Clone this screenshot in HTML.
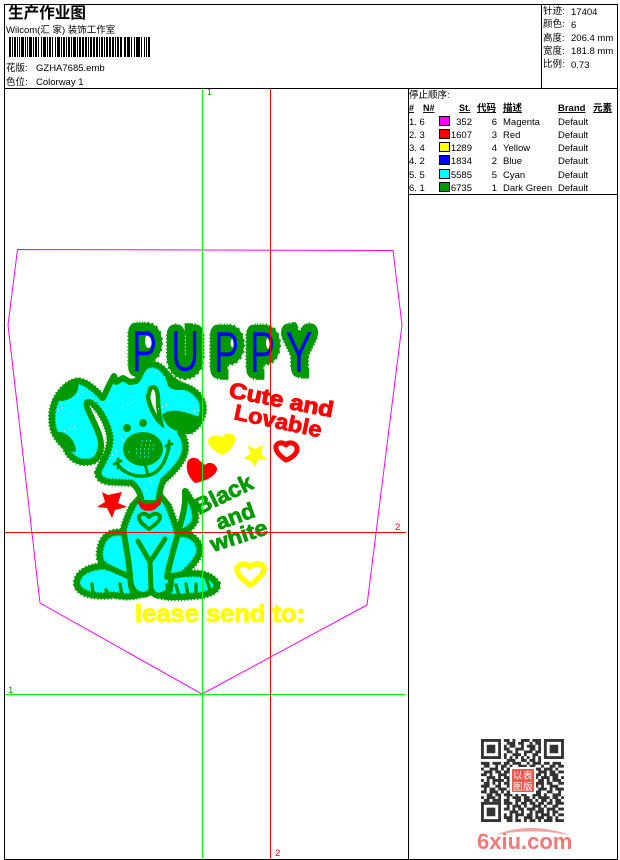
<!DOCTYPE html>
<html><head><meta charset="utf-8"><title>生产作业图</title>
<style>
html,body{margin:0;padding:0;background:#fff}
body{width:620px;height:860px;overflow:hidden}
svg{display:block}
text{font-family:"Liberation Sans","Noto Sans CJK SC",sans-serif;font-size:9.5px;fill:#000}
.g{fill:none;stroke:#090;stroke-width:5;stroke-linejoin:round;stroke-linecap:round}
.f{fill:#0ff;stroke:#090;stroke-width:6;stroke-linejoin:round}
.d{fill:none;stroke:#090;stroke-width:8;stroke-dasharray:1.2 2}
.h{font-weight:bold;text-decoration:underline}
.pg{font-size:58px;fill:#090;stroke:#090;stroke-width:21;stroke-linejoin:round}
.pf{font-size:58px;fill:none;stroke:#090;stroke-width:24;stroke-dasharray:1.5 2.500}
.pb{font-size:58px;fill:#00f;stroke:#090;stroke-width:.5}
</style></head><body>
<svg xmlns="http://www.w3.org/2000/svg" width="620" height="860" viewBox="0 0 620 860">
<rect width="620" height="860" fill="#fff"/>

<!-- pocket -->
<path d="M17.500 249.500L393 250.500L402 325L367 605L202 694L40 603L8 325Z" fill="none" stroke="#f0f" stroke-width="1"/>

<!-- PUPPY green layer -->
<g>
<text class="pg" transform="translate(132 367) scale(.65 .88)">P</text>
<text class="pf" transform="translate(132 367) scale(.65 .88)">P</text>
<text class="pg" transform="translate(171 369) scale(.68 .88)">U</text>
<text class="pf" transform="translate(171 369) scale(.68 .88)">U</text>
<text class="pg" transform="translate(214 369) scale(.65 .88)">P</text>
<text class="pf" transform="translate(214 369) scale(.65 .88)">P</text>
<text class="pg" transform="translate(250 369) scale(.65 .88)">P</text>
<text class="pf" transform="translate(250 369) scale(.65 .88)">P</text>
<text class="pg" transform="translate(287 368) scale(.65 .88)">Y</text>
<text class="pf" transform="translate(287 368) scale(.65 .88)">Y</text>
</g>
<ellipse cx="148.500" cy="341" rx="3.500" ry="7" fill="#fff"/>
<ellipse cx="234" cy="343" rx="3.500" ry="5" fill="#fff"/>
<ellipse cx="269" cy="343" rx="3" ry="6" fill="#fff"/>
<g>
<text class="pb" transform="translate(132 371) scale(.65 1)">P</text>
<text class="pb" transform="translate(171 371) scale(.68 1)">U</text>
<text class="pb" transform="translate(214 372) scale(.65 1)">P</text>
<text class="pb" transform="translate(250 372) scale(.65 1)">P</text>
<text class="pb" transform="translate(285 372) scale(.72 1)">Y</text>
</g>

<!-- tail -->
<path class="f" d="M185 491C192 500 197 512 195 521C191 529 185 532 178 533C181 520 186 510 185 491Z"/>
<path class="d" d="M185 491C192 500 197 512 195 521C191 529 185 532 178 533"/>

<!-- feet -->
<path class="f" d="M103 566C87 567 75 574 77 586C82 596 100 597 115 595C125 598 140 597 150 590L148 576L125 570Z"/>
<path class="d" d="M103 566C87 567 75 574 77 586C82 596 100 597 115 595C125 598 140 597 150 590"/>
<path class="f" d="M153 592C160 598 175 598 195 596C210 595 218 590 217 584C212 575 200 572 186 574L160 576Z"/>
<path class="d" d="M153 592C160 598 175 598 195 596C210 595 218 590 217 584C212 575 200 572 186 574"/>

<!-- body -->
<path class="f" d="M133 505L142 495H160L168 505C172 515 176 525 178 535C175 550 172 570 170 590C160 598 155 597 151 590C148 597 135 597 131 585C129 565 125 550 122 535C124 525 128 515 133 505Z"/>
<path class="d" d="M133 505C128 515 124 525 122 535M168 505C172 515 176 525 178 535"/>

<!-- haunches -->
<path class="f" d="M124 533C110 530 102 537 100 550C98 560 102 565 110 568L130 577C129 560 126 548 124 533Z"/>
<path class="d" d="M124 533C110 530 102 537 100 550C98 560 102 565 110 568"/>
<path class="f" d="M178 534C192 532 200 542 200 551C198 560 190 568 183 574L167 577C170 560 174 548 178 534Z"/>
<path class="d" d="M178 534C192 532 200 542 200 551C198 560 190 568 183 574"/>

<!-- leg lines and toes -->
<path class="g" d="M138 541L150 562L165 539M150 562L151 590"/>
<path class="g" style="stroke-width:3.500" d="M92 584L93 595M106 590L110 597M120 584L122 596M130 587L132 594M167 585L169 596M176 585L179 596M186 584L188 596M196 584L196 594M206 578L210 590"/>

<!-- chest heart -->
<path class="g" style="stroke-width:4" d="M149 529C143 525 138 520 139 516C143 512 147 514 149 517C152 514 157 512 160 516C161 520 155 525 149 529Z"/>

<!-- head and left ear silhouette -->
<path class="f" d="M103 398C97 392 88 382 78 381C65 383 53 398 52 415C51 432 58 440 65 446C70 460 80 463 88 462C96 462 100 455 101 447C102 435 92 420 87 407C85 400 90 401 94 405C103 414 110 430 110 440C109 455 100 465 98 472C98 478 102 481 110 482L132 483C138 488 141 495 142 503H158C159 495 160 488 163 481C172 473 180 465 184 455C187 447 185 438 180 432L190 431C200 425 204 415 203 405C201 395 192 389 186 387C175 383 170 378 166 373C160 364 150 362 145 367C140 372 140 378 136 381L130 382L123 378L116 382L114 376C110 382 107 390 103 398Z"/>
<path class="d" d="M103 398C97 392 88 382 78 381C65 383 53 398 52 415C51 432 58 440 65 446C70 460 80 463 88 462C96 462 100 455 101 447M94 405C103 414 110 430 110 440C109 455 100 465 98 472C98 478 102 481 110 482L132 483M163 481C172 473 180 465 184 455C187 447 185 438 180 432M190 431C200 425 204 415 203 405C201 395 192 389 186 387C175 383 170 378 166 373C160 364 150 362 145 367"/>

<!-- ear patches -->
<path d="M55 400C60 388 70 383 78 384C80 392 72 400 62 401Z" fill="#090"/>
<path d="M55 432C66 430 76 440 76 452C65 452 56 442 55 432Z" fill="#090"/>
<path d="M165 376L186 388C180 392 172 390 168 386Z" fill="#090"/>
<path d="M162 415C170 408 180 410 200 417C196 426 190 431 180 431C172 431 165 425 162 415Z" fill="#090"/>

<!-- right ear sliver -->
<path d="M150 389C155 384 158 390 158 400C158 410 160 418 161 423C155 418 149 405 148 397Z" fill="#fff" stroke="#090" stroke-width="4.500"/>

<!-- eyes, muzzle, mouth -->
<circle cx="127" cy="428" r="4" fill="#090"/>
<circle cx="143" cy="423" r="4" fill="#090"/>
<ellipse cx="143" cy="449" rx="20" ry="17" fill="#090"/>
<path d="M142 441h1m3 0h1m3 0h1m-10 4h1m3 0h1m3 0h1m3 0h1M136 449h1m3 0h1m3 0h1m3 0h1m3 0h1M136 453h1m3 0h1m3 0h1m3 0h1M128 452h1M140 457h1m3 0h1m3 0h1" stroke="#0ff" stroke-width="1.300" fill="none"/>
<path class="g" style="stroke-width:3.500" d="M117 463C120 468 123 471 130 474C140 478 150 476 156 472C163 466 167 458 169 445"/>
<path class="g" style="stroke-width:3" d="M145 464L148 475M114 464L121 461M118 459L118 468M166 446L172 444M169 441L169 449"/>

<!-- specks -->
<path d="M58 410h1m3-2h1m8 5h1m-8 18h1m4-2h1m4-2h1M78 395h1m3-3h1m36 16h1m3-2h1m3-2h1m3-2h1m3-2h1m22 9h1m3-2h1m3-2h1m27 6h1m3-1h1m3-2h1M112 455h1m3-4h1M122 440h1M155 372h1m3 2h1M128 470h1M150 482h1m4-3h1M146 490h1" stroke="#fff" stroke-width="1.200" fill="none"/>

<!-- collar -->
<path d="M139 501C144 506 154 507 160 498C160 507 153 511 147 510C142 510 139 506 139 501Z" fill="#f00" stroke="#f00" stroke-width="1.500"/>

<!-- red shapes -->
<path d="M102 492L108 495L122 492L118 503L127 507L115 510L112 518L107 508L97 507L105 502Z" fill="#f00"/>
<path d="M195 483C188 477 186 470 187 463C189 457 196 456 200 461C203 463 204 464 205 465C209 461 215 463 217 468C218 474 208 481 195 483Z" fill="#f00"/>
<path d="M222 455C214 451 207 445 208 440C211 435 217 434 222 437C225 433 233 432 235 437C236 444 230 452 222 455Z" fill="#ff0"/>
<path d="M248 445L255 449L263 445L261 454L267 459L258 460L255 467L251 461L244 458L250 454Z" fill="#ff0"/>
<path d="M286 460C280 456 275 451 276 446C278 442 283 442 286 445C289 441 296 443 297 448C298 453 292 458 286 460Z" fill="none" stroke="#f00" stroke-width="5" stroke-linejoin="round"/>
<path d="M250 585C243 580 236 574 237 568C240 563 246 563 250 567C254 563 262 562 264 568C264 575 256 581 250 585Z" fill="none" stroke="#ff0" stroke-width="5.500" stroke-linejoin="round"/>

<!-- stitched text -->
<text transform="translate(228 397) rotate(11)" textLength="106" lengthAdjust="spacingAndGlyphs" style="font-size:22px;font-weight:bold;fill:#f00;stroke:#f00;stroke-width:1">Cute and</text>
<text transform="translate(233 419) rotate(12)" textLength="89" lengthAdjust="spacingAndGlyphs" style="font-size:22px;font-weight:bold;fill:#f00;stroke:#f00;stroke-width:.8">Lovable</text>
<text transform="translate(199 515) rotate(-26)" textLength="62" lengthAdjust="spacingAndGlyphs" style="font-size:23px;font-weight:bold;fill:#090;stroke:#090;stroke-width:.8">Black</text>
<text transform="translate(219 530) rotate(-20)" textLength="40" lengthAdjust="spacingAndGlyphs" style="font-size:22px;font-weight:bold;fill:#090;stroke:#090;stroke-width:.8">and</text>
<text transform="translate(213 552) rotate(-18)" textLength="59" lengthAdjust="spacingAndGlyphs" style="font-size:22px;font-weight:bold;fill:#090;stroke:#090;stroke-width:.8">white</text>
<text x="135" y="622" textLength="170" lengthAdjust="spacingAndGlyphs" style="font-size:25px;font-weight:bold;fill:#ff0;stroke:#ff0;stroke-width:1">lease send to:</text>

<!-- guides -->
<path d="M202.500 89V858.500M4.500 694.500H406" stroke="#0f0" stroke-width="1" fill="none"/>
<path d="M270.500 89V858.500M4.500 532.500H406" stroke="#f00" stroke-width="1" fill="none"/>
<text x="207" y="95" style="fill:#090;font-size:9px">1</text>
<text x="395" y="530" style="fill:#f00;font-size:9.500px">2</text>
<text x="8" y="693" style="fill:#090;font-size:9.500px">1</text>
<text x="275" y="856" style="fill:#f00;font-size:9.500px">2</text>

<!-- frame -->
<path d="M4.500 4.500H617.500V859.500H4.500ZM4.500 88.500H617.500M541.500 4.500V88.500M408.500 88.500V859.500M408.500 194.500H617.500" fill="none" stroke="#000" stroke-width="1"/>

<!-- header -->
<text x="8" y="18" style="font-size:15.600px;font-weight:bold">生产作业图</text>
<text x="6" y="33" style="font-size:9.500px">Wilcom(汇 家) 装饰工作室</text>
<path fill="#000" d="M9 37h2v20h-2zM12 37h1v20h-1zM14 37h2v20h-2zM17 37h1v20h-1zM19 37h1v20h-1zM21 37h3v20h-3zM25 37h1v20h-1zM27 37h1v20h-1zM29 37h3v20h-3zM33 37h1v20h-1zM35 37h2v20h-2zM38 37h1v20h-1zM41 37h1v20h-1zM43 37h3v20h-3zM47 37h1v20h-1zM49 37h2v20h-2zM52 37h1v20h-1zM55 37h1v20h-1zM57 37h3v20h-3zM61 37h1v20h-1zM63 37h2v20h-2zM66 37h1v20h-1zM68 37h2v20h-2zM71 37h1v20h-1zM73 37h3v20h-3zM77 37h1v20h-1zM79 37h2v20h-2zM82 37h2v20h-2zM85 37h2v20h-2zM88 37h1v20h-1zM90 37h2v20h-2zM93 37h2v20h-2zM96 37h2v20h-2zM99 37h1v20h-1zM101 37h2v20h-2zM104 37h1v20h-1zM106 37h2v20h-2zM109 37h2v20h-2zM112 37h2v20h-2zM115 37h1v20h-1zM117 37h2v20h-2zM120 37h2v20h-2zM124 37h2v20h-2zM127 37h3v20h-3zM131 37h1v20h-1zM134 37h1v20h-1zM136 37h4v20h-4zM141 37h1v20h-1zM144 37h1v20h-1zM146 37h1v20h-1zM148 37h2v20h-2z"/>
<text x="6" y="71">花版:</text><text x="36" y="71">GZHA7685.emb</text>
<text x="6" y="85">色位:</text><text x="36" y="85">Colorway 1</text>

<text x="543" y="14">针迹:</text><text x="571" y="15">17404</text>
<text x="543" y="27">颜色:</text><text x="571" y="28">6</text>
<text x="543" y="41">高度:</text><text x="571" y="41">206.4 mm</text>
<text x="543" y="54">宽度:</text><text x="571" y="54">181.8 mm</text>
<text x="543" y="67">比例:</text><text x="571" y="68">0.73</text>

<!-- stop sequence table -->
<text x="409" y="98">停止顺序:</text>
<text x="409" y="111" class="h" style="font-size:9px">#</text>
<text x="423" y="111" class="h" style="font-size:9px">N#</text>
<text x="459" y="111" class="h" style="font-size:9px">St.</text>
<text x="477" y="111" class="h">代码</text>
<text x="503" y="111" class="h">描述</text>
<text x="558" y="111" class="h" style="font-size:9.500px">Brand</text>
<text x="593" y="111" class="h">元素</text>

<g>
<text x="409" y="125">1. 6</text><rect x="439.500" y="116.500" width="10" height="9" fill="#f0f" stroke="#000"/><text x="472" y="125" text-anchor="end">352</text><text x="497" y="125" text-anchor="end">6</text><text x="503" y="125">Magenta</text><text x="558" y="125">Default</text>
<text x="409" y="138">2. 3</text><rect x="439.500" y="129.500" width="10" height="9" fill="#f00" stroke="#000"/><text x="472" y="138" text-anchor="end">1607</text><text x="497" y="138" text-anchor="end">3</text><text x="503" y="138">Red</text><text x="558" y="138">Default</text>
<text x="409" y="151">3. 4</text><rect x="439.500" y="142.500" width="10" height="9" fill="#ff0" stroke="#000"/><text x="472" y="151" text-anchor="end">1289</text><text x="497" y="151" text-anchor="end">4</text><text x="503" y="151">Yellow</text><text x="558" y="151">Default</text>
<text x="409" y="164">4. 2</text><rect x="439.500" y="155.500" width="10" height="9" fill="#00f" stroke="#000"/><text x="472" y="164" text-anchor="end">1834</text><text x="497" y="164" text-anchor="end">2</text><text x="503" y="164">Blue</text><text x="558" y="164">Default</text>
<text x="409" y="178">5. 5</text><rect x="439.500" y="169.500" width="10" height="9" fill="#0ff" stroke="#000"/><text x="472" y="178" text-anchor="end">5585</text><text x="497" y="178" text-anchor="end">5</text><text x="503" y="178">Cyan</text><text x="558" y="178">Default</text>
<text x="409" y="191">6. 1</text><rect x="439.500" y="182.500" width="10" height="9" fill="#090" stroke="#000"/><text x="472" y="191" text-anchor="end">6735</text><text x="497" y="191" text-anchor="end">1</text><text x="503" y="191">Dark Green</text><text x="558" y="191">Default</text>
</g>

<!-- QR -->
<g transform="translate(481 739) scale(2.86)" fill="none" stroke="#333" stroke-width="1">
<path d="M.5 .5h6v6h-6zM22.500 .5h6v6h-6zM.5 22.500h6v6h-6z"/>
<path d="M2 2h3v3h-3zM24 2h3v3h-3zM2 24h3v3h-3z" fill="#333" stroke="none"/>
<path d="M8 .5h2M11 .5h1M14 .5h3M18 .5h3M9 1.500h3M13 1.500h2M17 1.500h1M19 1.500h2M8 2.500h1M10 2.500h2M14 2.500h1M16 2.500h3M20 2.500h1M8 3.500h2M12 3.500h3M17 3.500h2M20 3.500h1M9 4.500h2M12 4.500h1M15 4.500h3M19 4.500h2M8 5.500h1M11 5.500h3M15 5.500h1M18 5.500h2M8 6.500h1M10 6.500h1M12 6.500h1M14 6.500h1M16 6.500h1M18 6.500h1M20 6.500h1M9 7.500h3M14 7.500h2M17 7.500h2M20 7.500h1M0 8.500h3M4 8.500h3M8 8.500h2M11 8.500h3M16 8.500h1M18 8.500h3M22 8.500h2M25 8.500h3M1 9.500h2M5 9.500h1M7 9.500h2M10 9.500h1M13 9.500h3M17 9.500h2M21 9.500h1M24 9.500h2M27 9.500h2M0 10.500h1M3 10.500h3M7 10.500h1M9 10.500h3M14 10.500h2M18 10.500h3M22 10.500h3M26 10.500h1M1 11.500h3M5 11.500h2M8 11.500h2M11 11.500h1M13 11.500h3M17 11.500h1M20 11.500h3M24 11.500h2M27 11.500h2M0 12.500h2M3 12.500h1M6 12.500h3M10 12.500h1M19 12.500h2M22 12.500h1M24 12.500h3M2 13.500h3M6 13.500h1M8 13.500h2M19 13.500h1M21 13.500h3M25 13.500h2M28 13.500h1M0 14.500h1M2 14.500h1M4 14.500h4M9 14.500h1M20 14.500h2M23 14.500h1M25 14.500h3M1 15.500h2M4 15.500h1M6 15.500h1M8 15.500h2M19 15.500h3M23 15.500h2M27 15.500h2M0 16.500h3M5 16.500h2M9 16.500h1M19 16.500h1M21 16.500h1M24 16.500h3M1 17.500h1M3 17.500h2M6 17.500h3M10 17.500h1M20 17.500h3M24 17.500h1M26 17.500h3M0 18.500h2M3 18.500h3M7 18.500h1M9 18.500h2M12 18.500h3M16 18.500h2M19 18.500h2M23 18.500h2M27 18.500h1M2 19.500h2M5 19.500h2M8 19.500h3M12 19.500h1M14 19.500h2M18 19.500h3M22 19.500h1M25 19.500h3M0 20.500h1M2 20.500h3M6 20.500h1M9 20.500h1M11 20.500h3M15 20.500h2M18 20.500h1M20 20.500h4M25 20.500h2M28 20.500h1M1 21.500h2M4 21.500h3M8 21.500h2M12 21.500h2M15 21.500h3M19 21.500h1M21 21.500h2M24 21.500h1M26 21.500h2M8 22.500h3M12 22.500h1M14 22.500h2M17 22.500h2M20 22.500h2M23 22.500h2M26 22.500h3M9 23.500h1M11 23.500h3M15 23.500h1M18 23.500h3M22 23.500h1M25 23.500h2M8 24.500h2M11 24.500h1M13 24.500h2M16 24.500h3M20 24.500h2M23 24.500h3M27 24.500h2M10 25.500h3M14 25.500h1M17 25.500h1M19 25.500h3M23 25.500h1M25 25.500h2M8 26.500h1M10 26.500h1M12 26.500h3M16 26.500h2M19 26.500h1M21 26.500h3M25 26.500h1M27 26.500h2M8 27.500h3M12 27.500h1M15 27.500h3M19 27.500h3M23 27.500h2M26 27.500h1M9 28.500h2M12 28.500h2M15 28.500h1M17 28.500h2M20 28.500h1M22 28.500h3M26 28.500h3"/>
</g>
<rect x="510" y="767" width="26" height="27" fill="#fff"/>
<rect x="512" y="769" width="22" height="23" rx="1" fill="#f2534f"/>
<text x="513" y="779" style="font-size:9.500px;fill:#fff">以</text><text x="523" y="779" style="font-size:9.500px;fill:#fff">表</text>
<text x="513" y="790" style="font-size:9.500px;fill:#fff">图</text><text x="523" y="790" style="font-size:9.500px;fill:#fff">版</text>

<!-- logo -->
<path d="M496 835C515 826 545 825 572 836C548 830 518 830 496 835Z" fill="#f2a3a3"/>
<text x="477" y="849" style="font-size:22px;font-weight:bold;fill:#f07a78">6xiu.com</text>
</svg>
</body></html>
